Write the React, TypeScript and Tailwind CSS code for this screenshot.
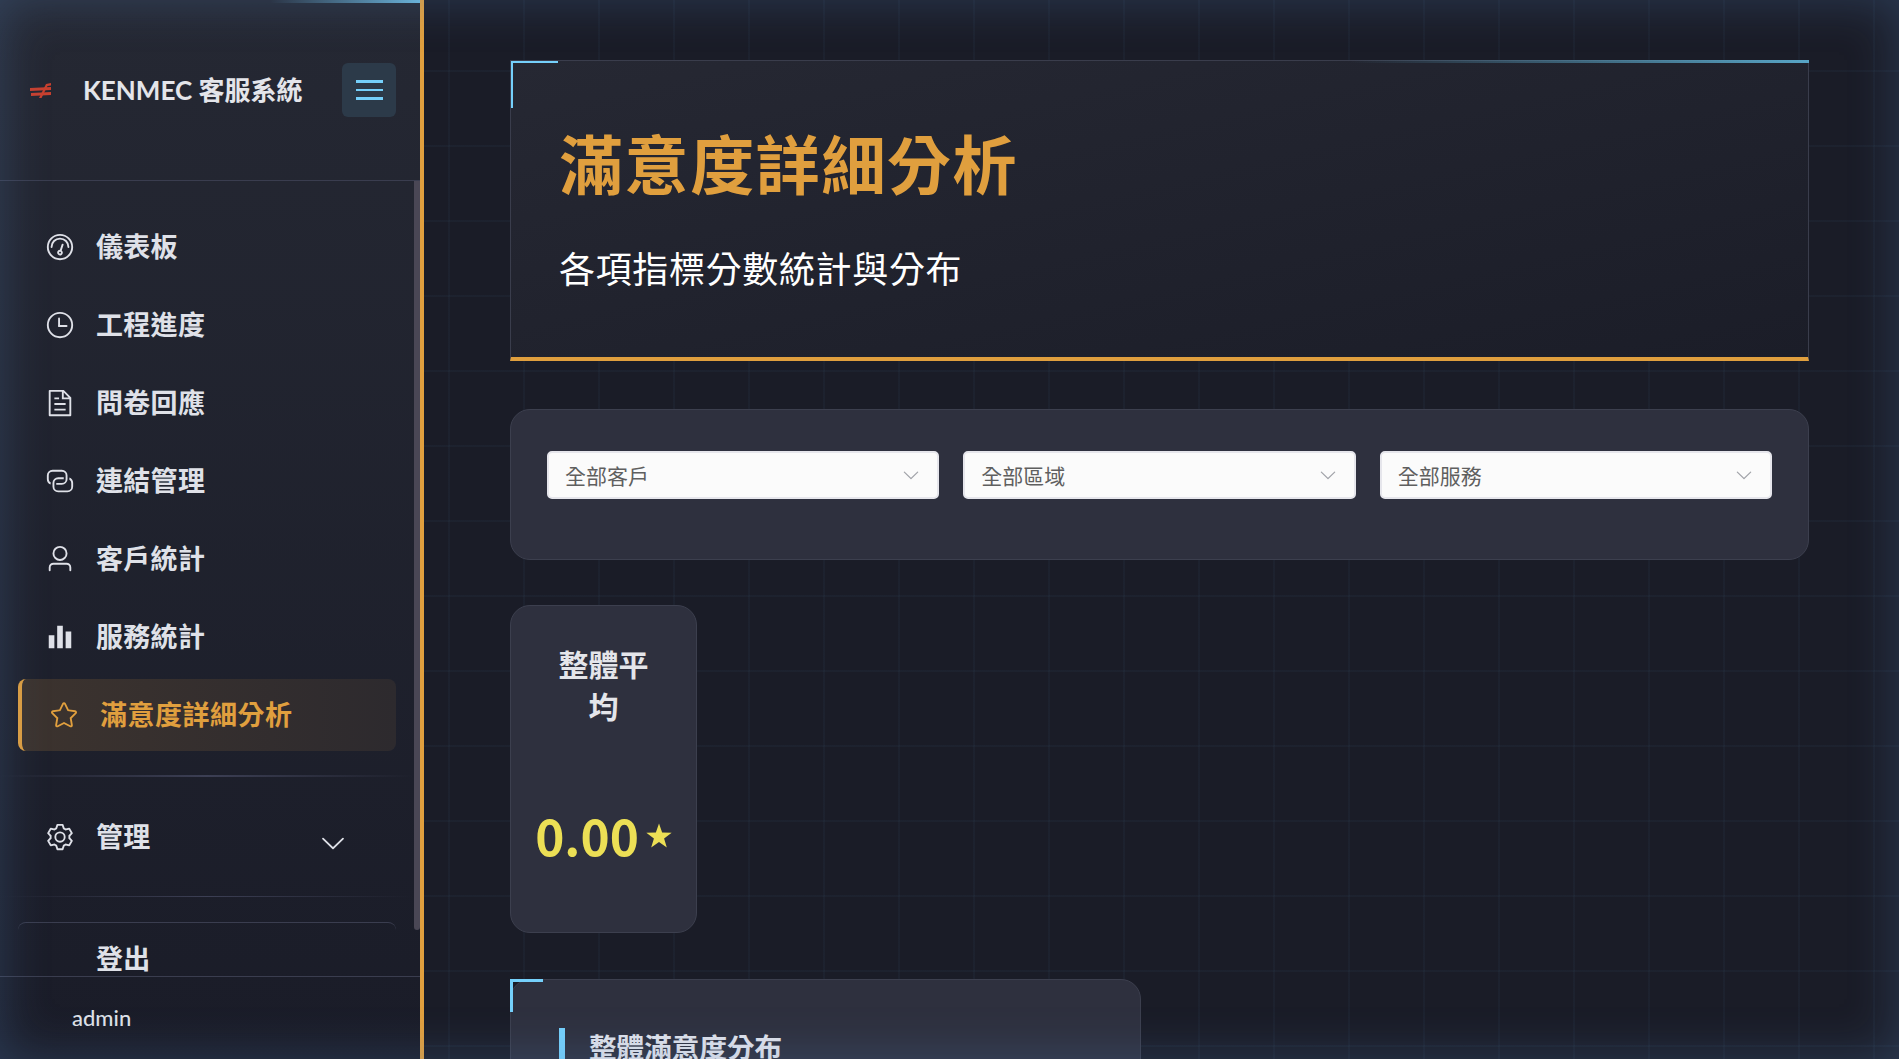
import type { ReactNode } from 'react';

const CJK = "font-['Lato','Noto_Sans_CJK_TC',sans-serif]";

const Ico = ({ children, className = 'w-[30px] h-[30px]' }: { children: ReactNode; className?: string }) => (
    <svg viewBox="0 0 1024 1024" fill="currentColor" className={`${className} shrink-0`}>
        {children}
    </svg>
);

const OdometerIcon = () => (
    <Ico>
        <path d="M512 896a384 384 0 1 0 0-768 384 384 0 0 0 0 768m0 64a448 448 0 1 1 0-896 448 448 0 0 1 0 896" />
        <path d="M192 512a320 320 0 1 1 640 0 32 32 0 1 1-64 0 256 256 0 1 0-512 0 32 32 0 0 1-64 0" />
        <path d="M570.432 627.84A96 96 0 1 1 509.568 608l60.992-187.776A32 32 0 1 1 631.424 440l-60.992 187.776zM502.08 734.464a32 32 0 1 0 19.84-60.928 32 32 0 0 0-19.84 60.928" />
    </Ico>
);

const ClockIcon = () => (
    <Ico>
        <path d="M512 896a384 384 0 1 0 0-768 384 384 0 0 0 0 768m0 64a448 448 0 1 1 0-896 448 448 0 0 1 0 896" />
        <path d="M480 256a32 32 0 0 1 32 32v256a32 32 0 0 1-64 0V288a32 32 0 0 1 32-32" />
        <path d="M480 512h256q32 0 32 32t-32 32H480q-32 0-32-32t32-32" />
    </Ico>
);

const DocumentIcon = () => (
    <Ico>
        <path d="M832 384H576V128H192v768h640zm-26.496-64L640 154.496V320zM160 64h480l256 256v608a32 32 0 0 1-32 32H160a32 32 0 0 1-32-32V96a32 32 0 0 1 32-32m160 448h384v64H320zm0-192h160v64H320zm0 384h384v64H320z" />
    </Ico>
);

const ConnectionIcon = () => (
    <Ico>
        <path d="M640 384v64H448a128 128 0 0 0-128 128v128a128 128 0 0 0 128 128h320a128 128 0 0 0 128-128V576a128 128 0 0 0-64-110.848V394.88c74.56 26.368 128 97.472 128 181.056v128a192 192 0 0 1-192 192H448a192 192 0 0 1-192-192V576a192 192 0 0 1 192-192z" />
        <path d="M384 640v-64h192a128 128 0 0 0 128-128V320a128 128 0 0 0-128-128H256a128 128 0 0 0-128 128v128a128 128 0 0 0 64 110.848v70.272A192.064 192.064 0 0 1 64 448V320a192 192 0 0 1 192-192h320a192 192 0 0 1 192 192v128a192 192 0 0 1-192 192z" />
    </Ico>
);

const UserIcon = () => (
    <Ico>
        <path d="M512 512a192 192 0 1 0 0-384 192 192 0 0 0 0 384m0 64a256 256 0 1 1 0-512 256 256 0 0 1 0 512m320 320v-96a96 96 0 0 0-96-96H288a96 96 0 0 0-96 96v96a32 32 0 1 1-64 0v-96a160 160 0 0 1 160-160h448a160 160 0 0 1 160 160v96a32 32 0 1 1-64 0" />
    </Ico>
);

const HistogramIcon = () => (
    <Ico>
        <path d="M416 896V128h192v768zm-288 0V448h192v448zm576 0V320h192v576z" />
    </Ico>
);

const StarIcon = () => (
    <Ico>
        <path d="m512 747.84 228.16 119.936a6.4 6.4 0 0 0 9.28-6.72l-43.52-254.08 184.512-179.904a6.4 6.4 0 0 0-3.52-10.88l-255.104-37.12L517.76 147.904a6.4 6.4 0 0 0-11.52 0L392.192 379.072l-255.104 37.12a6.4 6.4 0 0 0-3.52 10.88L318.08 606.976l-43.584 254.08a6.4 6.4 0 0 0 9.28 6.72zM313.6 924.48a70.4 70.4 0 0 1-102.144-74.24l37.888-220.928L88.96 472.96A70.4 70.4 0 0 1 128 352.896l221.76-32.256 99.2-200.96a70.4 70.4 0 0 1 126.208 0l99.2 200.96 221.824 32.256a70.4 70.4 0 0 1 39.04 120.064L774.72 629.376l37.888 220.928a70.4 70.4 0 0 1-102.144 74.24L512 820.096l-198.4 104.32z" />
    </Ico>
);

const SettingIcon = () => (
    <Ico>
        <path d="M600.704 64a32 32 0 0 1 30.464 22.208l35.2 109.376c14.784 7.232 28.928 15.36 42.432 24.512l112.384-24.192a32 32 0 0 1 34.432 15.36L944.32 364.8a32 32 0 0 1-4.032 37.504l-77.12 85.12a357.12 357.12 0 0 1 0 49.024l77.12 85.248a32 32 0 0 1 4.032 37.504l-88.704 153.6a32 32 0 0 1-34.432 15.296L708.8 803.904c-13.44 9.088-27.648 17.28-42.368 24.512l-35.264 109.376A32 32 0 0 1 600.704 960H423.296a32 32 0 0 1-30.464-22.208L357.696 828.48a351.616 351.616 0 0 1-42.56-24.64l-112.32 24.256a32 32 0 0 1-34.432-15.36L79.68 659.2a32 32 0 0 1 4.032-37.504l77.12-85.248a357.12 357.12 0 0 1 0-48.896l-77.12-85.248A32 32 0 0 1 79.68 364.8l88.704-153.6a32 32 0 0 1 34.432-15.296l112.32 24.256c13.568-9.152 27.776-17.408 42.56-24.64l35.2-109.312A32 32 0 0 1 423.232 64H600.64zm-23.424 64H446.72l-36.352 113.088-24.512 11.968a294.113 294.113 0 0 0-34.816 20.096l-22.656 15.36-116.224-25.088-65.28 113.152 79.68 88.192-1.92 27.136a293.12 293.12 0 0 0 0 40.192l1.92 27.136-79.808 88.192 65.344 113.152 116.224-25.024 22.656 15.296a294.113 294.113 0 0 0 34.816 20.096l24.512 11.968L446.72 896h130.688l36.48-113.152 24.448-11.904a288.282 288.282 0 0 0 34.752-20.096l22.592-15.296 116.288 25.024 65.28-113.152-79.744-88.192 1.92-27.136a293.12 293.12 0 0 0 0-40.256l-1.92-27.136 79.808-88.128-65.344-113.152-116.288 24.96-22.592-15.232a287.616 287.616 0 0 0-34.752-20.096l-24.448-11.904L577.344 128zM512 320a192 192 0 1 1 0 384 192 192 0 0 1 0-384m0 64a128 128 0 1 0 0 256 128 128 0 0 0 0-256" />
    </Ico>
);

const ArrowDown = ({ className }: { className: string }) => (
    <Ico className={className}>
        <path d="M831.872 340.864 512 652.672 192.128 340.864a30.592 30.592 0 0 0-42.752 0 29.12 29.12 0 0 0 0 41.6L489.664 714.24a32 32 0 0 0 44.672 0l340.288-331.712a29.12 29.12 0 0 0 0-41.728 30.592 30.592 0 0 0-42.752 0z" />
    </Ico>
);

// red logo mark, two bars with a slanted stroke through them
const Logo = () => (
    <svg viewBox="0 0 21 15" className="w-[21px] h-[15px] shrink-0" fill="#c8402f">
        <path d="M0 5 L21 4 V7 L0 8 Z" />
        <path d="M1 10 L21 9 V12 L1 13 Z" />
        <path d="M9 15 L16 1 L21 0 V2.5 L17.5 3 L11.5 15 Z" />
    </svg>
);

const navItems = [
    { label: '儀表板', icon: <OdometerIcon /> },
    { label: '工程進度', icon: <ClockIcon /> },
    { label: '問卷回應', icon: <DocumentIcon /> },
    { label: '連結管理', icon: <ConnectionIcon /> },
    { label: '客戶統計', icon: <UserIcon /> },
    { label: '服務統計', icon: <HistogramIcon /> },
];

const filters = ['全部客戶', '全部區域', '全部服務'];

const Sidebar = () => (
    <aside className="relative w-[424px] shrink-0 h-full flex flex-col border-r-4 border-[#e09f3e] bg-gradient-to-b from-[#252833] to-[#1a1c28]">
        <div className="absolute top-0 right-0 w-[150px] h-[3px] bg-gradient-to-r from-transparent to-[#6cb8dc]" />
        <div className="h-[181px] shrink-0 border-b border-[#3a3d4f] flex items-center pl-[30px] pr-[24px]">
            <Logo />
            <span className="ml-[32px] text-[26px] font-bold text-[#e4e5ea] whitespace-nowrap leading-none">KENMEC 客服系統</span>
            <button className="ml-auto w-[54px] h-[54px] rounded-[6px] bg-[#2c3a49] flex flex-col items-center justify-center gap-[6px]">
                <span className="block w-[27px] h-[2.5px] bg-[#75d0fb]" />
                <span className="block w-[27px] h-[2.5px] bg-[#75d0fb]" />
                <span className="block w-[27px] h-[2.5px] bg-[#75d0fb]" />
            </button>
        </div>

        <div className="relative flex-1 min-h-0 overflow-hidden">
            <nav className="pt-[30px] pl-[18px] pr-[24px]">
                {navItems.map((item) => (
                    <a key={item.label} className="h-[72px] mb-[6px] pl-[27px] flex items-center gap-[21px] text-[#dfe1e8] text-[27px] tracking-[0.3px] font-bold">
                        {item.icon}
                        <span>{item.label}</span>
                    </a>
                ))}
                <a className="h-[72px] pl-[27px] flex items-center gap-[21px] rounded-[8px] border-l-4 border-[#e09f3e] bg-gradient-to-r from-[#3c332e] to-[#2d2a2e] text-[#e09f3e] text-[27px] tracking-[0.5px] font-bold">
                    <StarIcon />
                    <span>滿意度詳細分析</span>
                </a>
            </nav>
            <div className="mt-[24px] mr-[6px] h-[2px] bg-gradient-to-r from-transparent via-[#3c3f54] to-transparent" />
            <div className="mt-[24px] h-[72px] pl-[45px] pr-[72px] flex items-center gap-[21px] text-[#dfe1e8] text-[27px] tracking-[0.3px] font-bold">
                <SettingIcon />
                <span>管理</span>
                <ArrowDown className="ml-auto mt-[12px] w-[30px] h-[30px]" />
            </div>
            <div className="mt-[23px] mr-[6px] h-px bg-gradient-to-r from-transparent via-[#3c3f54] to-transparent" />
            <div className="mt-[25px] ml-[18px] mr-[24px] h-[72px] pl-[78px] pt-[2px] flex items-center rounded-[8px] border-t border-[#3a3d4f] text-[#dfe1e8] text-[27px] tracking-[0.3px] font-bold">
                登出
            </div>
            <div className="absolute top-0 right-0 w-[6px] h-[749px] rounded-b-[3px] bg-[#4a4755]" />
        </div>

        <div className="h-[83px] shrink-0 border-t border-[#3a3d4f] pl-[72px] pt-[25px] text-[22px] leading-[32px] font-medium text-[#dfe1e8]">admin</div>
    </aside>
);

export default function App() {
    return (
        <div className={`relative flex w-full h-screen overflow-hidden bg-[#1a1c27] ${CJK}`}>
            <Sidebar />
            <main className="relative flex-1 min-w-0 h-full overflow-hidden pl-[86px] pr-[90px] pt-[60px] bg-[linear-gradient(rgba(110,190,240,0.035)_2px,transparent_2px),linear-gradient(90deg,rgba(110,190,240,0.035)_2px,transparent_2px)] bg-[length:75px_75px] bg-[position:-351px_70px]">
                <section className="relative h-[301px] border border-[#3a3d4c] border-b-4 border-b-[#e09f3e] bg-gradient-to-br from-[#262833] to-[#1b1d28] pl-[48px]">
                    <div className="absolute top-0 left-0 w-[47px] h-[47px] border-t-2 border-l-2 border-[#75d0fb]" />
                    <div className="absolute -top-px right-[-1px] w-[460px] h-[3px] bg-gradient-to-r from-transparent to-[#58a5c6]" />
                    <h1 className="pt-[66px] text-[64px] leading-[76px] tracking-[1.6px] font-bold text-[#e09f3e]">滿意度詳細分析</h1>
                    <p className="mt-[39px] text-[36px] leading-[54px] tracking-[0.66px] text-white">各項指標分數統計與分布</p>
                </section>

                <section className="mt-[48px] h-[151px] rounded-[20px] border border-[#3c3f4e] bg-[#2e303e] px-[36px] pt-[41px]">
                    <div className="grid grid-cols-3 gap-[24px]">
                        {filters.map((f) => (
                            <div key={f} className="h-[48px] rounded-[5px] border-2 border-[#e6e6ec] bg-[#fbfbfb] pl-[16px] pr-[16px] flex items-center justify-between text-[21px] text-[#5f5f5f]">
                                <span className="mt-[1px]">{f}</span>
                                <ArrowDown className="w-[20px] h-[20px] text-[#a0a2a8]" />
                            </div>
                        ))}
                    </div>
                </section>

                <section className="mt-[45px] w-[187px] h-[328px] rounded-[20px] border border-[#3c3f4e] bg-[#2e303e] px-[40px] pt-[37px] text-center">
                    <h3 className="text-[30px] leading-[42px] font-bold text-[#e4e5ea]">整體平均</h3>
                    <div className="mt-[73px] -mx-[40px] flex items-center justify-center gap-[7px] text-[#ecdf55]">
                        <span className="text-[49.5px] leading-[70px] font-bold font-['Noto_Sans_CJK_TC',sans-serif]">0.00</span>
                        <svg viewBox="0 0 24 24" className="w-[26px] h-[26px] mt-[1px]" fill="currentColor">
                            <path d="M12 0.5 L14.9 8.8 L23.7 8.9 L16.7 14.2 L19.2 22.7 L12 17.6 L4.8 22.7 L7.3 14.2 L0.3 8.9 L9.1 8.8 Z" />
                        </svg>
                    </div>
                </section>

                <section className="relative mt-[46px] w-[631px] h-[300px] rounded-t-[20px] border border-[#3c3f4e] bg-[#2e303e] pl-[48px] pt-[48px]">
                    <div className="absolute -top-px -left-px w-[33px] h-[33px] border-t-[3px] border-l-[3px] border-[#75d0fb]" />
                    <h2 className="border-l-[6px] border-[#75d0fb] pl-[24px] text-[27.6px] leading-[40px] font-bold text-[#e0e2ea]">整體滿意度分布</h2>
                </section>
            </main>
            {/* soft blue glow around the viewport edge */}
            <div className="pointer-events-none absolute inset-0 shadow-[inset_0_0_50px_rgba(90,140,200,0.28)]" />
        </div>
    );
}
